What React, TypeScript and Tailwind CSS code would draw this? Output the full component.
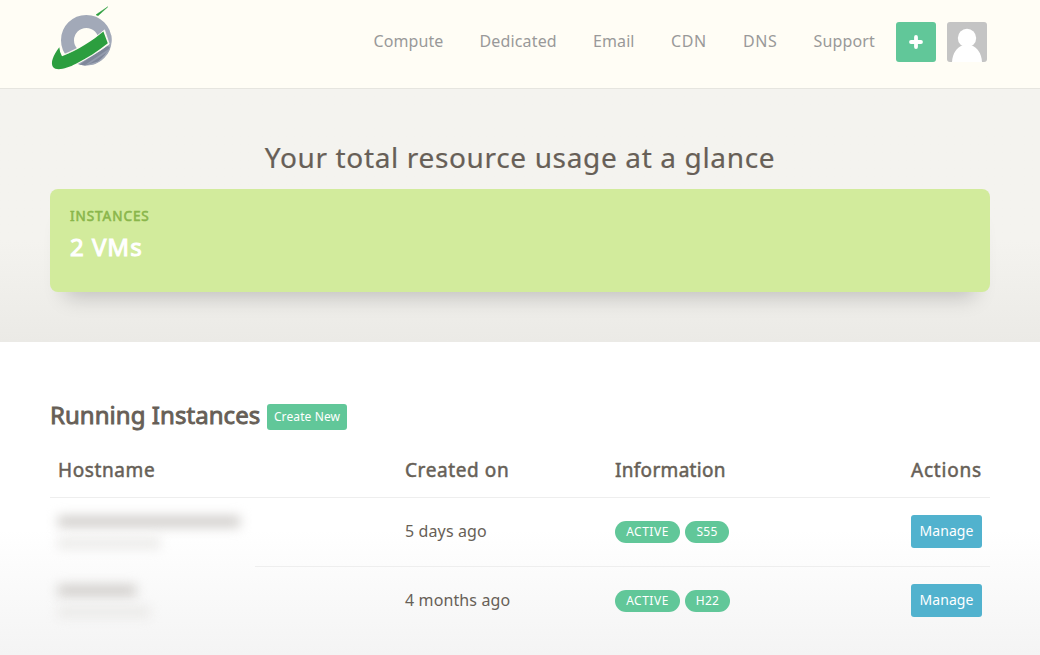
const NAV = [
  { label: 'Compute', cls: 'w-[70px] mr-[36px] tracking-[0.1px]' },
  { label: 'Dedicated', cls: 'w-[77px] mr-[36.5px] tracking-[0.15px]' },
  { label: 'Email', cls: 'w-[42px] mr-[36px] tracking-[0.1px]' },
  { label: 'CDN', cls: 'w-[36px] mr-[36px] tracking-[0.6px]' },
  { label: 'DNS', cls: 'w-[34px] mr-[36.5px] tracking-[0.6px]' },
  { label: 'Support', cls: 'w-[62px] mr-[20.5px] tracking-[0.15px]' },
];

const ROWS = [
  { created: '5 days ago', plan: 'S55', planCls: 'w-[44px]', name: [182], ip: [102] },
  { created: '4 months ago', plan: 'H22', planCls: 'w-[45px]', name: [78], ip: [92] },
];

function Logo() {
  return (
    <svg width="64" height="66" viewBox="0 0 64 66" className="block">
      <circle cx="36.3" cy="34.2" r="18.8" fill="none" stroke="#a2a9b8" strokeWidth="13" />
      <path d="M61.3 29 C62.5 39 59 48 51.5 54.2 C45 59.2 37 60.5 29 58.4 L57 40Z" fill="#a2a9b8" />
      <path d="M57 40 L60 41 Q56 49 48 55.5 L35 59.4 L29.5 58.4Z" fill="#7f879a" />
      <path d="M60 42 L57.5 46 L40 57.5 L34.5 59.2Z" fill="#939bad" />
      <path
        d="M9 40.5 C2 49 -1 57 2.5 61.5 C6.5 66 17 63 26 58.5 C37 52.5 49 46 59.2 38 L54.5 23.9 C44 33 29 42.5 14 48.4 L12 48.5Z"
        fill="#fffdf5"
        stroke="#fffdf5"
        strokeWidth=".8"
      />
      <path
        d="M9.3 41.3 C3 49.5 .3 57 3 61 C6.5 65.5 17 62.5 26 57.8 C37 52 48 45.5 57.8 37.3 L53.4 25.6 C43 34.5 28.5 44 12 50.2 Q9.7 47 9.3 41.3Z"
        fill="#2c9e3f"
      />
      <path d="M46 8.8 L57.8 .8 L48 9.8Z" fill="#2c9e3f" stroke="#2c9e3f" strokeWidth=".5" />
    </svg>
  );
}

function Avatar() {
  return (
    <svg width="40" height="40" viewBox="0 0 40 40" className="block rounded-[3px] bg-[#c4c4c4]">
      <circle cx="20" cy="16" r="9.2" fill="#fff" />
      <path d="M5 40 C5.5 31 10 25.5 15 23.5 H25 C30 25.5 34.5 31 35 40Z" fill="#fff" />
    </svg>
  );
}

function BlurBars({ widths, cls }: { widths: number[]; cls: string }) {
  return (
    <div className="flex gap-[2px]">
      {widths.map((w, i) => (
        <div key={i} className={cls} style={{ width: w }} />
      ))}
    </div>
  );
}

export default function App() {
  return (
    <div className="h-[655px] w-[1040px] overflow-hidden whitespace-nowrap bg-white font-['Noto_Sans',sans-serif] text-[#675f57]">
      <header className="flex h-[89px] border-b border-[#e6e5df] bg-[#fffdf5] pl-[50px]">
        <div className="mt-[6px] w-[323.5px]">
          <Logo />
        </div>
        <nav className="flex pt-[29px] text-[16px] leading-6 text-[#999]">
          {NAV.map((n) => (
            <a key={n.label} className={n.cls}>
              {n.label}
            </a>
          ))}
        </nav>
        <button className="-ml-[0.5px] mr-[11px] mt-[22px] flex size-10 items-center justify-center rounded-[3px] bg-[#61c799]">
          <svg width="14" height="14" viewBox="0 0 14 14">
            <path d="M7 2V12M2 7H12" stroke="#fff" strokeWidth="3.8" strokeLinecap="round" />
          </svg>
        </button>
        <div className="mt-[22px]">
          <Avatar />
        </div>
      </header>

      <section className="h-[253px] bg-linear-to-b from-[#f4f3ef] from-60% to-[#ebeae6] px-[50px] pt-[48px]">
        <h1 className="flex h-[52px] justify-center text-[28px] leading-[40px] tracking-[0.65px] [-webkit-text-stroke:0.2px]">
          Your total resource usage at a glance
        </h1>
        <div className="h-[103px] rounded-[8px] bg-[#d2eb9c] px-5 pt-[17px] shadow-[0_20px_20px_-15px_rgba(0,0,0,0.2)]">
          <div className="text-[13.5px] leading-5 tracking-[0.95px] text-[#8ab64b] [-webkit-text-stroke:0.6px]">INSTANCES</div>
          <div className="mt-[5px] text-[24px] leading-8 tracking-[1px] text-white [-webkit-text-stroke:1px]">2 VMs</div>
        </div>
      </section>

      <main className="h-[313px] bg-linear-to-b from-white from-60% to-[#f4f4f4] px-[50px] pt-[56px]">
        <div className="flex h-[56px]">
          <h2 className="w-[217px] text-[24px] leading-[34px] tracking-[0.05px] [-webkit-text-stroke:0.9px]">Running Instances</h2>
          <button className="mt-[6px] h-[26px] w-[80px] rounded-[3px] bg-[#61c799] text-[12px] leading-[26px] tracking-[0.1px] text-white">
            Create New
          </button>
        </div>
        <div className="grid h-[44px] grid-cols-[347px_210px_296px_1fr] border-b border-[#eeeeee] pl-2 text-[19px] leading-[32px] [-webkit-text-stroke:0.5px]">
          <span className="tracking-[0.6px]">Hostname</span>
          <span className="tracking-[0.6px]">Created on</span>
          <span className="tracking-[0.3px]">Information</span>
          <span className="tracking-[0.8px]">Actions</span>
        </div>
        {ROWS.map((r, i) => (
          <div key={r.plan}>
            <div className="grid h-[68px] grid-cols-[347px_210px_296px_1fr] items-center pl-2">
              <div className="flex flex-col gap-[11px]">
                <BlurBars widths={r.name} cls="h-[11px] bg-[#cfccc9] blur-[6px]" />
                <BlurBars widths={r.ip} cls="h-[10px] bg-[#e9e8e6] blur-[6px]" />
              </div>
              <span className="pb-[2px] text-[16px] tracking-[0.12px]">{r.created}</span>
              <div className="flex gap-[5px] text-center text-[12px] leading-[22px] text-white">
                <span className="w-[65px] rounded-full bg-[#61c799] tracking-[0.5px]">ACTIVE</span>
                <span className={`${r.planCls} rounded-full bg-[#61c799] tracking-[0.3px]`}>{r.plan}</span>
              </div>
              <button className="mb-[2px] h-[33px] w-[71px] rounded-[3px] bg-[#51b2ce] text-[14px] leading-[32px] tracking-[0.1px] text-white">
                Manage
              </button>
            </div>
            {i === 0 && <div className="ml-[205px] h-px bg-[#eeeeee]" />}
          </div>
        ))}
      </main>
    </div>
  );
}
